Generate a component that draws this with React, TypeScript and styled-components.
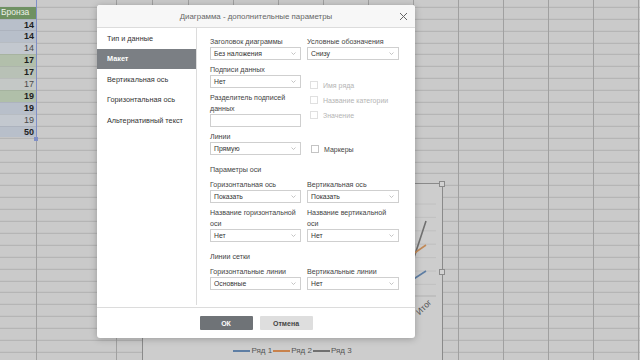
import React from "react";
import styled, { createGlobalStyle } from "styled-components";

const GlobalStyle = createGlobalStyle`
  html, body { margin: 0; padding: 0; }
  body {
    width: 640px; height: 360px; overflow: hidden;
    font-family: "Liberation Sans", Arial, sans-serif;
  }
  * { box-sizing: border-box; }
`;

const Page = styled.div`
  position: relative;
  width: 640px;
  height: 360px;
  overflow: hidden;
`;

const Sheet = styled.div`
  display: flex;
  height: 360px;
  background-color: #cacaca;
  background-image: repeating-linear-gradient(
    to bottom,
    transparent 0,
    transparent 10.9px,
    #b0b0b0 10.9px,
    #b0b0b0 11.9px
  );
  background-position: 0 -4.2px;
`;

const Column = styled.div<{ $w: number }>`
  flex: 0 0 ${(p) => p.$w}px;
  height: 100%;
  border-right: 1px solid #a0a0a0;
`;

const FirstColumn = styled.div`
  flex: 0 0 37px;
  height: 100%;
  display: flex;
  flex-direction: column;
`;

const Selection = styled.div`
  position: relative;
  height: 138.5px;
  padding-top: 6.7px;
  border-right: 1px solid #7f8fc6;
`;

const SelHandle = styled.div`
  position: absolute;
  right: -2px;
  bottom: -2px;
  width: 4px;
  height: 4px;
  background: #7f8fc6;
`;

const ColRest = styled.div`
  flex: 1;
  border-right: 1px solid #a0a0a0;
`;

const HeadCell = styled.div`
  height: 11.9px;
  background: #6f9162;
  color: #eef2ea;
  font-size: 8.5px;
  line-height: 11.9px;
  padding-left: 1px;
  white-space: nowrap;
  overflow: hidden;
`;

const Cell = styled.div<{ $bg: string; $bold: boolean }>`
  height: 11.9px;
  background: ${(p) => p.$bg};
  border-top: 1px solid rgba(0, 0, 0, 0.06);
  color: ${(p) => (p.$bold ? "#1e1e1e" : "#4a4a4a")};
  font-weight: ${(p) => (p.$bold ? 700 : 400)};
  font-size: 9px;
  line-height: 11px;
  text-align: right;
  padding-right: 2px;
`;

/* ---------- chart ---------- */
const Chart = styled.div`
  position: absolute;
  left: 142px;
  top: 183px;
  width: 301px;
  height: 179px;
  border: 1px solid #8a8a8a;
  background: #cdcdcd;
  display: flex;
  flex-direction: column;
`;

const Handle = styled.div<{ $x: string; $y: string }>`
  position: absolute;
  left: ${(p) => p.$x};
  top: ${(p) => p.$y};
  width: 6px;
  height: 6px;
  margin: -3.5px 0 0 -3.5px;
  border: 1px solid #8a8a8a;
  background: #d2d2d2;
`;

const Plot = styled.svg`
  flex: 0 0 162px;
  display: block;
`;

const Legend = styled.div`
  display: flex;
  justify-content: center;
  align-items: center;
  gap: 1px;
  font-size: 8px;
  color: #555;
`;

const LegendItem = styled.div`
  display: flex;
  align-items: center;
  gap: 1px;
`;

const LegendLine = styled.span<{ $c: string }>`
  display: inline-block;
  width: 17px;
  height: 2px;
  background: ${(p) => p.$c};
`;

/* ---------- dialog ---------- */
const Dialog = styled.div`
  position: absolute;
  left: 97px;
  top: 5px;
  width: 318px;
  height: 333px;
  background: #fff;
  border-radius: 3px;
  box-shadow: 0 1px 7px rgba(0, 0, 0, 0.25);
  display: flex;
  flex-direction: column;
  overflow: hidden;
`;

const Header = styled.div`
  position: relative;
  flex: 0 0 23px;
  display: flex;
  align-items: center;
  justify-content: center;
  background: #f7f7f7;
  border-bottom: 1px solid #dcdcdc;
  color: #666;
  font-size: 7.9px;
`;

const Close = styled.button`
  position: absolute;
  right: 6px;
  top: 6px;
  width: 11px;
  height: 11px;
  padding: 0;
  border: 0;
  background: transparent;
  display: flex;
  align-items: center;
  justify-content: center;
`;

const Body = styled.div`
  flex: 0 0 279px;
  display: flex;
`;

const Sidebar = styled.div`
  flex: 0 0 100px;
  border-right: 1px solid #dcdcdc;
  height: 277px;
  display: flex;
  flex-direction: column;
`;

const NavItem = styled.div<{ $active?: boolean }>`
  height: 20.5px;
  display: flex;
  align-items: center;
  padding-left: 10px;
  font-size: 7.3px;
  color: ${(p) => (p.$active ? "#fff" : "#333")};
  background: ${(p) => (p.$active ? "#7b7f84" : "transparent")};
  font-weight: ${(p) => (p.$active ? 700 : 400)};
`;

const Content = styled.div`
  flex: 1;
  padding: 9px 0 0 13px;
  display: flex;
  flex-direction: column;
  gap: 5px;
`;

const Row = styled.div`
  display: grid;
  grid-template-columns: 91px 92px;
  column-gap: 6px;
`;

const Stack = styled.div`
  display: flex;
  flex-direction: column;
  gap: 5px;
`;

const Field = styled.div`
  display: flex;
  flex-direction: column;
`;

const Label = styled.div`
  font-size: 7.1px;
  line-height: 10px;
  color: #444;
  white-space: nowrap;
`;

const TwoLineLabel = styled(Label)`
  line-height: 10.5px;
`;

const SelectBox = styled.div`
  height: 13px;
  border: 1px solid #cfcfcf;
  display: flex;
  align-items: center;
  justify-content: space-between;
  padding: 0 4px 0 3px;
  font-size: 6.8px;
  color: #333;
`;

const InputBox = styled.div`
  height: 13px;
  border: 1px solid #cfcfcf;
`;

const SectionTitle = styled.div`
  margin-top: 5px;
  font-size: 7.1px;
  line-height: 10px;
  color: #444;
`;

const CheckList = styled.div`
  display: flex;
  flex-direction: column;
  gap: 7px;
  padding: 16px 0 0 3px;
`;

const CheckRow = styled.label<{ $disabled?: boolean }>`
  display: flex;
  align-items: center;
  gap: 5px;
  height: 8px;
  font-size: 7px;
  color: ${(p) => (p.$disabled ? "#b4b4b4" : "#444")};
`;

const Box = styled.span<{ $disabled?: boolean }>`
  width: 8px;
  height: 8px;
  border: 1px solid ${(p) => (p.$disabled ? "#e0e0e0" : "#c4c4c4")};
  background: #fff;
`;

const MarkerCell = styled.div`
  align-self: end;
  padding: 0 0 2px 4px;
`;

const Footer = styled.div`
  flex: 1;
  border-top: 1px solid #dcdcdc;
  display: flex;
  align-items: center;
  justify-content: center;
  gap: 7px;
`;

const Button = styled.button<{ $primary?: boolean }>`
  width: 53px;
  height: 14px;
  border: 0;
  border-radius: 1px;
  padding: 0;
  font-family: inherit;
  font-size: 7px;
  font-weight: 700;
  background: ${(p) => (p.$primary ? "#6f7377" : "#dedede")};
  color: ${(p) => (p.$primary ? "#fff" : "#444")};
`;

const Caret = () => (
  <svg width="5" height="3" viewBox="0 0 5 3">
    <path d="M0.5 0.5 L2.5 2.5 L4.5 0.5" fill="none" stroke="#b5b5b5" strokeWidth="0.8" />
  </svg>
);

const Select = ({ value }: { value: string }) => (
  <SelectBox>
    <span>{value}</span>
    <Caret />
  </SelectBox>
);

const Check = ({ label, disabled }: { label: string; disabled?: boolean }) => (
  <CheckRow $disabled={disabled}>
    <Box $disabled={disabled} />
    {label}
  </CheckRow>
);

const cells: { v: number; bg: string; bold: boolean }[] = [
  { v: 14, bg: "#b8bfca", bold: true },
  { v: 14, bg: "#b8bfca", bold: true },
  { v: 14, bg: "#c3c8cf", bold: false },
  { v: 17, bg: "#b2bfab", bold: true },
  { v: 17, bg: "#b8c1b6", bold: true },
  { v: 17, bg: "#c4c8c6", bold: false },
  { v: 19, bg: "#b0bfa9", bold: true },
  { v: 19, bg: "#b8bfca", bold: true },
  { v: 19, bg: "#c3c8cf", bold: false },
  { v: 50, bg: "#b8bfca", bold: true },
];

const colWidths = [80, 36, 36, 45, 45, 45, 45, 45, 45, 45, 45, 45, 45, 45];

const gridYs = [20, 33.4, 46.8, 60.2, 73.6, 87, 100.4];

export default function App() {
  return (
    <Page>
      <GlobalStyle />
      <Sheet>
        <FirstColumn>
          <Selection>
            <HeadCell>Бронза</HeadCell>
            {cells.map((c, i) => (
              <Cell key={i} $bg={c.bg} $bold={c.bold}>
                {c.v}
              </Cell>
            ))}
            <SelHandle />
          </Selection>
          <ColRest />
        </FirstColumn>
        {colWidths.map((w, i) => (
          <Column key={i} $w={w} />
        ))}
      </Sheet>

      <Chart>
        <Plot width="299" height="162" viewBox="0 0 299 162">
          {gridYs.map((y) => (
            <line key={y} x1="20" x2="293" y1={y} y2={y} stroke="#bcbcbc" strokeWidth="0.8" />
          ))}
          <line x1="20" x2="293" y1="112" y2="112" stroke="#a9a9a9" strokeWidth="0.8" />
          <polyline points="243,118 263,98 283,37" fill="none" stroke="#707070" strokeWidth="1.6" />
          <polyline points="243,90 263,75 283,61" fill="none" stroke="#c28a58" strokeWidth="1.6" />
          <polyline points="243,108 263,100 283,87" fill="none" stroke="#5e7ea4" strokeWidth="1.6" />
          <text
            x="289"
            y="119"
            fontSize="8.5"
            fill="#555"
            textAnchor="end"
            transform="rotate(-45 289 119)"
            fontFamily="Liberation Sans, Arial, sans-serif"
          >
            Итог
          </text>
        </Plot>
        <Legend>
          <LegendItem>
            <LegendLine $c="#5e7ea4" />
            Ряд 1
          </LegendItem>
          <LegendItem>
            <LegendLine $c="#c8824c" />
            Ряд 2
          </LegendItem>
          <LegendItem>
            <LegendLine $c="#707070" />
            Ряд 3
          </LegendItem>
        </Legend>
        <Handle $x="0px" $y="0px" />
        <Handle $x="50%" $y="0px" />
        <Handle $x="100%" $y="0px" />
        <Handle $x="0px" $y="50%" />
        <Handle $x="100%" $y="50%" />
      </Chart>

      <Dialog>
        <Header>
          Диаграмма - дополнительные параметры
          <Close aria-label="close">
            <svg width="9" height="9" viewBox="0 0 9 9">
              <path d="M1 1 L8 8 M8 1 L1 8" stroke="#666" strokeWidth="1" />
            </svg>
          </Close>
        </Header>
        <Body>
          <Sidebar>
            <NavItem>Тип и данные</NavItem>
            <NavItem $active>Макет</NavItem>
            <NavItem>Вертикальная ось</NavItem>
            <NavItem>Горизонтальная ось</NavItem>
            <NavItem>Альтернативный текст</NavItem>
          </Sidebar>
          <Content>
            <Row>
              <Field>
                <Label>Заголовок диаграммы</Label>
                <Select value="Без наложения" />
              </Field>
              <Field>
                <Label>Условные обозначения</Label>
                <Select value="Снизу" />
              </Field>
            </Row>
            <Row>
              <Stack>
                <Field>
                  <Label>Подписи данных</Label>
                  <Select value="Нет" />
                </Field>
                <Field>
                  <TwoLineLabel>
                    Разделитель подписей
                    <br />
                    данных
                  </TwoLineLabel>
                  <InputBox />
                </Field>
              </Stack>
              <CheckList>
                <Check label="Имя ряда" disabled />
                <Check label="Название категории" disabled />
                <Check label="Значение" disabled />
              </CheckList>
            </Row>
            <Row>
              <Field>
                <Label>Линии</Label>
                <Select value="Прямую" />
              </Field>
              <MarkerCell>
                <Check label="Маркеры" />
              </MarkerCell>
            </Row>
            <SectionTitle>Параметры оси</SectionTitle>
            <Row>
              <Field>
                <Label>Горизонтальная ось</Label>
                <Select value="Показать" />
              </Field>
              <Field>
                <Label>Вертикальная ось</Label>
                <Select value="Показать" />
              </Field>
            </Row>
            <Row>
              <Field>
                <TwoLineLabel>
                  Название горизонтальной
                  <br />
                  оси
                </TwoLineLabel>
                <Select value="Нет" />
              </Field>
              <Field>
                <TwoLineLabel>
                  Название вертикальной
                  <br />
                  оси
                </TwoLineLabel>
                <Select value="Нет" />
              </Field>
            </Row>
            <SectionTitle>Линии сетки</SectionTitle>
            <Row>
              <Field>
                <Label>Горизонтальные линии</Label>
                <Select value="Основные" />
              </Field>
              <Field>
                <Label>Вертикальные линии</Label>
                <Select value="Нет" />
              </Field>
            </Row>
          </Content>
        </Body>
        <Footer>
          <Button $primary>ОК</Button>
          <Button>Отмена</Button>
        </Footer>
      </Dialog>
    </Page>
  );
}
